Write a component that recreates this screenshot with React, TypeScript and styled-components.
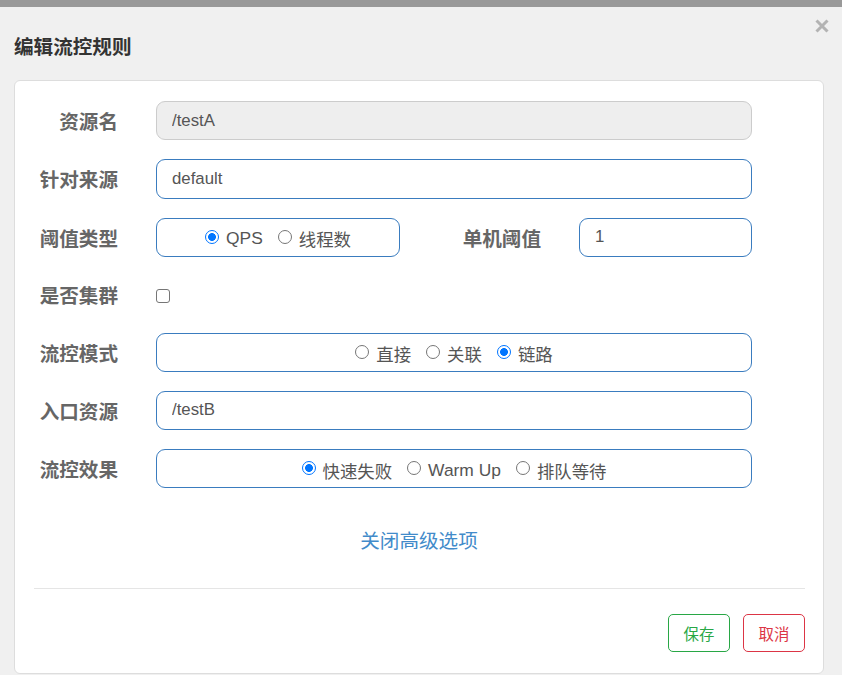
import React from "react";
import styled, { createGlobalStyle } from "styled-components";

const GlobalStyle = createGlobalStyle`
  html, body { margin: 0; padding: 0; }
  body {
    background: #f0f0f0;
    font-family: "Liberation Sans", Arial, "Noto Sans CJK SC", sans-serif;
    color: #555;
  }
  * { box-sizing: border-box; }
`;

const TopBar = styled.div`
  height: 7px;
  background: #999999;
`;

const Header = styled.div`
  display: flex;
  justify-content: space-between;
  align-items: flex-start;
  height: 73px;
  padding: 0 13px 0 14px;
`;

const Title = styled.h4`
  margin: 27px 0 0;
  font-size: 19.6px;
  line-height: 26px;
  font-weight: bold;
  color: #333;
`;

const CloseButton = styled.button`
  margin-top: 12px;
  padding: 0;
  border: none;
  background: transparent;
  width: 14px;
  height: 14px;
  display: flex;
  cursor: pointer;
`;

const Card = styled.div`
  margin: 0 18px 0 14px;
  background: #fff;
  border: 1px solid #dddddd;
  border-radius: 6px;
  padding-top: 20px;
`;

const Form = styled.div`
  display: flex;
  flex-direction: column;
  gap: 19.2px;
`;

const Row = styled.div<{ $height?: number }>`
  display: flex;
  align-items: center;
  height: ${(p) => p.$height ?? 39.2}px;
`;

const Label = styled.label<{ $width: number }>`
  width: ${(p) => p.$width}px;
  margin-right: 38px;
  text-align: right;
  font-size: 19.6px;
  font-weight: bold;
  color: #666;
  white-space: nowrap;
`;

const Input = styled.input<{ $width: number }>`
  width: ${(p) => p.$width}px;
  height: 39.2px;
  padding: 0 15px;
  border: 1px solid #3a7cbf;
  border-radius: 9px;
  background: #fff;
  font-family: inherit;
  font-size: 16.8px;
  color: #555;
  outline: none;
  &:disabled {
    background: #eeeeee;
    border-color: #cccccc;
    color: #555;
  }
`;

const RadioBox = styled.div<{ $width: number }>`
  width: ${(p) => p.$width}px;
  height: 39.2px;
  border: 1px solid #3a7cbf;
  border-radius: 9px;
  display: flex;
  align-items: center;
  justify-content: center;
  gap: 15px;
  padding-top: 3px;
`;

const RadioItem = styled.label`
  display: flex;
  align-items: center;
  gap: 7px;
  font-size: 17.4px;
  color: #555;
  white-space: nowrap;
`;

const RadioDot = styled.span<{ $checked: boolean }>`
  width: 14px;
  height: 14px;
  border-radius: 50%;
  flex: none;
  margin-top: -4px;
  border: ${(p) => (p.$checked ? "1.5px solid #0075ff" : "1px solid #767676")};
  background: ${(p) =>
    p.$checked
      ? "radial-gradient(circle, #0075ff 0 3.6px, #ffffff 4.2px)"
      : "#ffffff"};
`;

const CheckBox = styled.span`
  width: 14px;
  height: 14px;
  border: 1px solid #767676;
  border-radius: 3px;
  background: #fff;
  margin-top: 3px;
`;

const LinkRow = styled.div`
  padding-top: 40px;
  text-align: center;
  line-height: 26px;
`;

const Link = styled.a`
  font-size: 19.6px;
  color: #428bca;
  text-decoration: none;
  cursor: pointer;
`;

const Divider = styled.hr`
  margin: 32px 18px 0 19px;
  border: none;
  border-top: 1px solid #e5e5e5;
`;

const Footer = styled.div`
  display: flex;
  justify-content: flex-end;
  gap: 13px;
  padding: 25px 18px 21px;
`;

const OutlineButton = styled.button<{ $color: string }>`
  width: 62px;
  height: 38px;
  border: 1px solid ${(p) => p.$color};
  color: ${(p) => p.$color};
  background: #fff;
  border-radius: 5px;
  font-family: inherit;
  font-size: 15.4px;
  cursor: pointer;
`;

type Opt = { text: string; checked?: boolean };

const Radios = ({ width, options }: { width: number; options: Opt[] }) => (
  <RadioBox $width={width}>
    {options.map((o) => (
      <RadioItem key={o.text}>
        <RadioDot $checked={!!o.checked} />
        {o.text}
      </RadioItem>
    ))}
  </RadioBox>
);

export default function App() {
  return (
    <>
      <GlobalStyle />
      <TopBar />
      <Header>
        <Title>编辑流控规则</Title>
        <CloseButton aria-label="close">
          <svg width="14" height="14" viewBox="0 0 14 14">
            <path
              d="M1.5 1.5 L12.5 12.5 M12.5 1.5 L1.5 12.5"
              stroke="#b3b3b3"
              strokeWidth="3"
              strokeLinecap="butt"
            />
          </svg>
        </CloseButton>
      </Header>
      <Card>
        <Form>
          <Row>
            <Label $width={103}>资源名</Label>
            <Input $width={596} value="/testA" disabled readOnly />
          </Row>
          <Row>
            <Label $width={103}>针对来源</Label>
            <Input $width={596} value="default" readOnly />
          </Row>
          <Row>
            <Label $width={103}>阈值类型</Label>
            <Radios
              width={244}
              options={[{ text: "QPS", checked: true }, { text: "线程数" }]}
            />
            <Label $width={141}>单机阈值</Label>
            <Input $width={173} value="1" readOnly />
          </Row>
          <Row $height={37.2}>
            <Label $width={103}>是否集群</Label>
            <CheckBox />
          </Row>
          <Row>
            <Label $width={103}>流控模式</Label>
            <Radios
              width={596}
              options={[
                { text: "直接" },
                { text: "关联" },
                { text: "链路", checked: true },
              ]}
            />
          </Row>
          <Row>
            <Label $width={103}>入口资源</Label>
            <Input $width={596} value="/testB" readOnly />
          </Row>
          <Row>
            <Label $width={103}>流控效果</Label>
            <Radios
              width={596}
              options={[
                { text: "快速失败", checked: true },
                { text: "Warm Up" },
                { text: "排队等待" },
              ]}
            />
          </Row>
        </Form>
        <LinkRow>
          <Link>关闭高级选项</Link>
        </LinkRow>
        <Divider />
        <Footer>
          <OutlineButton $color="#28a745">保存</OutlineButton>
          <OutlineButton $color="#dc3545">取消</OutlineButton>
        </Footer>
      </Card>
    </>
  );
}
